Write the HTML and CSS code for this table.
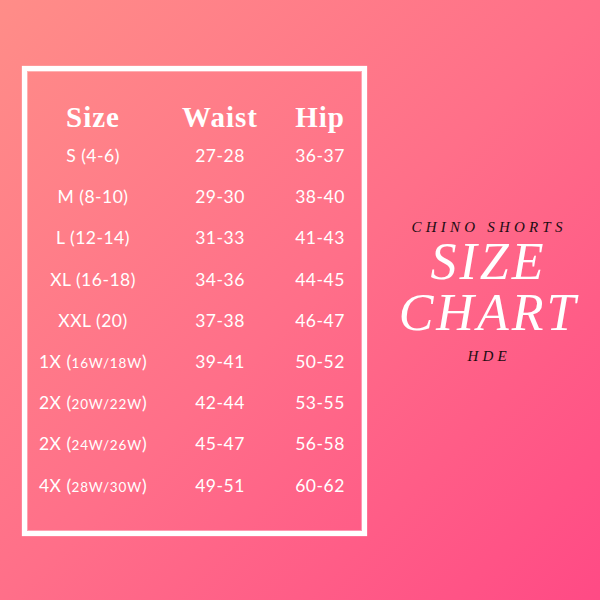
FILE: index.html
```html
<!DOCTYPE html>
<html>
<head>
<meta charset="utf-8">
<link rel="stylesheet" href="styles.css">
</head>
<body>
<div class="page">
  <div class="chart">
    <div class="grid">
      <div class="h">Size</div><div class="h">Waist</div><div class="h">Hip</div>
      <div class="c">S (4-6)</div><div class="c">27-28</div><div class="c">36-37</div>
      <div class="c">M (8-10)</div><div class="c">29-30</div><div class="c">38-40</div>
      <div class="c">L (12-14)</div><div class="c">31-33</div><div class="c">41-43</div>
      <div class="c">XL (16-18)</div><div class="c">34-36</div><div class="c">44-45</div>
      <div class="c">XXL (20)</div><div class="c">37-38</div><div class="c">46-47</div>
      <div class="c">1X (<span class="sm">16W/18W</span>)</div><div class="c">39-41</div><div class="c">50-52</div>
      <div class="c">2X (<span class="sm">20W/22W</span>)</div><div class="c">42-44</div><div class="c">53-55</div>
      <div class="c">2X (<span class="sm">24W/26W</span>)</div><div class="c">45-47</div><div class="c">56-58</div>
      <div class="c">4X (<span class="sm">28W/30W</span>)</div><div class="c">49-51</div><div class="c">60-62</div>
    </div>
  </div>
  <div class="title">
    <div class="sub">CHINO SHORTS</div>
    <div class="big">SIZE</div>
    <div class="big">CHART</div>
    <div class="sub brand">HDE</div>
  </div>
</div>
</body>
</html>
```

FILE: styles.css
```css
html, body {
  margin: 0;
  padding: 0;
}
.page {
  width: 600px;
  height: 600px;
  background: linear-gradient(135deg, #ff8d88 0%, #ff6f89 50%, #ff4a85 100%);
  display: flex;
  align-items: flex-start;
  box-sizing: border-box;
  padding: 66px 0 0 22px;
}
.chart {
  width: 345px;
  height: 470px;
  box-sizing: border-box;
  border: 5px solid #fff;
  box-shadow: inset 0 0 0 1px rgba(255,255,255,0.35), 0 0 1px rgba(255,255,255,0.8);
  padding: 28px 0 0 11px;
}
.grid {
  display: grid;
  grid-template-columns: 110px 144px 56px;
  grid-template-rows: 36px repeat(9, 41.2px);
  color: #fff;
}
.h {
  font-family: "Liberation Serif", serif;
  font-weight: bold;
  font-size: 29px;
  letter-spacing: 1px;
  line-height: 36px;
  text-align: center;
  white-space: nowrap;
}
.c {
  font-family: "Lato", sans-serif;
  font-size: 17.5px;
  letter-spacing: 0.5px;
  line-height: 41.2px;
  text-align: center;
  white-space: nowrap;
}
.sm {
  font-size: 13.5px;
  letter-spacing: 0.8px;
}
.title {
  width: 214px;
  margin-left: 13px;
  padding-top: 153px;
  display: flex;
  flex-direction: column;
  align-items: center;
  font-family: "Liberation Serif", serif;
  font-style: italic;
}
.sub {
  font-size: 15px;
  line-height: 17px;
  letter-spacing: 4.2px;
  padding-left: 4.2px;
  color: #1b0c12;
}
.big {
  font-size: 52px;
  line-height: 51px;
  letter-spacing: 3px;
  padding-left: 3px;
  color: #fff;
}
.title .big:first-of-type {
  margin-top: 2px;
}
.brand {
  margin-top: 10px;
}
```
